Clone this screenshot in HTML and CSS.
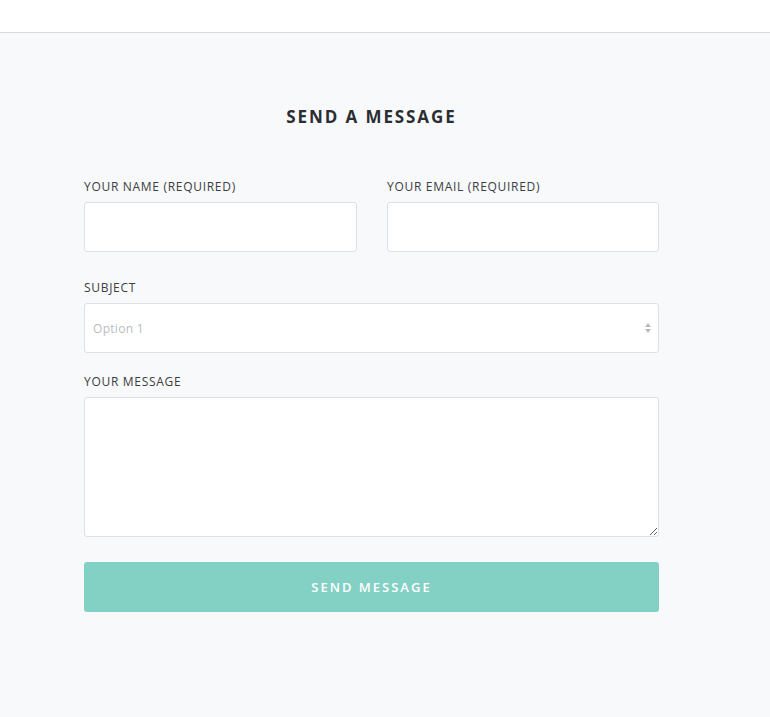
FILE: index.html
```html
<!DOCTYPE html>
<html lang="en">
  <head>
    <title>Send a message</title>
    <link rel="stylesheet" href="styles.css">
  </head>
  <body>
    <header class="topbar"></header>
    <main class="contact">
      <form class="contact-form">
        <h2 class="contact-title">Send a message</h2>
        <div class="row">
          <label class="field">
            <span class="field-label">Your Name (required)</span>
            <input type="text" class="field-input">
          </label>
          <label class="field">
            <span class="field-label">Your Email (required)</span>
            <input type="email" class="field-input">
          </label>
        </div>
        <label class="field">
          <span class="field-label">Subject</span>
          <span class="select">
            <select class="field-input">
              <option>Option 1</option>
              <option>Option 2</option>
            </select>
            <svg class="select-arrows" width="8" height="12" viewBox="0 0 8 12">
              <path d="M4 1 L7 5 H1 Z" fill="#b4b9bf"/>
              <path d="M4 11 L7 7 H1 Z" fill="#b4b9bf"/>
            </svg>
          </span>
        </label>
        <label class="field">
          <span class="field-label">Your Message</span>
          <textarea class="field-input field-area"></textarea>
        </label>
        <button type="button" class="send">Send Message</button>
      </form>
    </main>
  </body>
</html>
```

FILE: styles.css
```css
:root {
  --page-bg: #f8f9fa;
  --label-text: #3b3d42;
  --title-text: #2b2d33;
  --input-border: #dde0e4;
  --placeholder: #b8bdc3;
  --accent: #83d0c5;
}

html, body {
  margin: 0;
  min-height: 100vh;
  background: var(--page-bg);
}

body {
  font-family: "Open Sans", sans-serif;
}

.topbar {
  height: 32px;
  background: #fff;
  border-bottom: 1px solid #d8d9db;
}

.contact {
  padding: 72px 0 0 84px;
}

.contact-form {
  width: 575px;
  display: flex;
  flex-direction: column;
}

.contact-title {
  margin: 0 0 50px;
  text-align: center;
  font-size: 17px;
  font-weight: 700;
  letter-spacing: 1.9px;
  text-transform: uppercase;
  color: var(--title-text);
  line-height: 24px;
}

.row {
  display: grid;
  grid-template-columns: 273px 272px;
  column-gap: 30px;
  margin-bottom: 7px;
}

.field {
  display: flex;
  flex-direction: column;
  margin-bottom: 21px;
}

.field-label {
  font-size: 12px;
  line-height: 16px;
  letter-spacing: 0.7px;
  text-transform: uppercase;
  color: var(--label-text);
  margin-bottom: 7px;
}

.field-input {
  box-sizing: border-box;
  height: 50px;
  width: 100%;
  margin: 0;
  padding: 0 8px;
  border: 1px solid var(--input-border);
  border-radius: 3px;
  background: #fff;
  font: 12px "Open Sans", sans-serif;
  color: var(--placeholder);
}

.select {
  position: relative;
  display: block;
}
  .select select {
    appearance: none;
    -webkit-appearance: none;
    letter-spacing: 0.3px;
  }
  .select-arrows {
    position: absolute;
    right: 7px;
    top: 19px;
  }

.field-area {
  height: 140px;
  padding: 8px;
  resize: vertical;
}

.send {
  margin-top: 4px;
  height: 50px;
  border: 0;
  border-radius: 3px;
  background: var(--accent);
  color: #fff;
  font: 600 13px "Open Sans", sans-serif;
  letter-spacing: 2px;
  text-transform: uppercase;
}
```
